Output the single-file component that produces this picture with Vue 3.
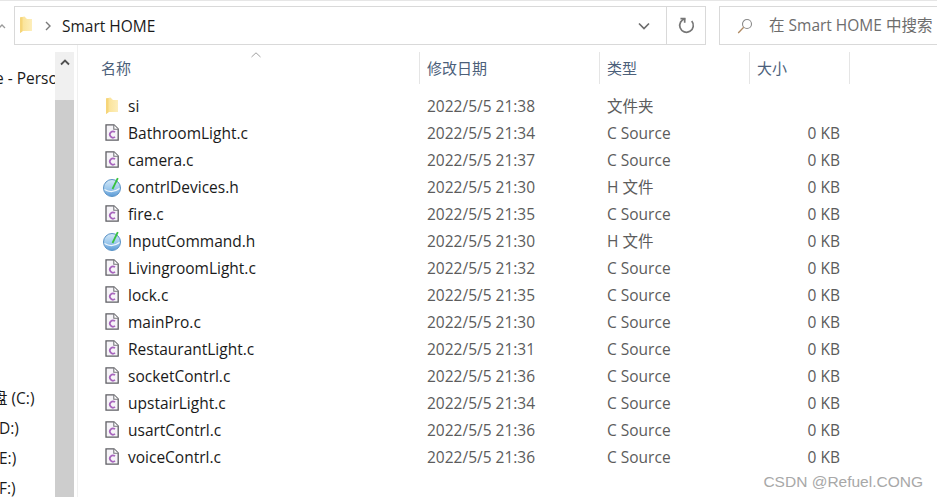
<template>
  <div class="window">
    <div class="toolbar">
      <svg class="up-arrow" width="10" height="8" viewBox="0 0 10 8"><path d="M1 6l3-3 3 3" fill="none" stroke="#9a9a9a" stroke-width="1.3" /></svg>
      <div class="address">
        <svg class="addr-folder" width="14" height="18" viewBox="0 0 14 18"><use href="#folder-shape" /></svg>
        <svg class="crumb" width="8" height="10" viewBox="0 0 8 10"><path d="M2 1l4 4-4 4" fill="none" stroke="#7a7a7a" stroke-width="1.4" /></svg>
        <span class="path">Smart HOME</span>
        <div class="addr-drop">
          <svg width="12" height="8" viewBox="0 0 12 8"><path d="M1 1.500l5 5 5-5" fill="none" stroke="#6d6d6d" stroke-width="1.7" /></svg>
        </div>
        <div class="addr-refresh">
          <svg width="17" height="17" viewBox="0 0 16 16"><path d="M4.800 2.400A6.400 6.400 0 1 0 11.200 2.400" transform="rotate(20 8 8)" fill="none" stroke="#767676" stroke-width="1.600" /><path d="M2.300 1.500h4v4" fill="none" stroke="#767676" stroke-width="1.600" /></svg>
        </div>
      </div>
      <div class="search">
        <svg class="search-icon" width="16" height="16" viewBox="0 0 16 16"><circle cx="10" cy="6" r="4.500" fill="none" stroke="#8a8a8a" stroke-width="1.100" /><path d="M6.700 9.300L1.200 15" stroke="#b08a62" stroke-width="1.300" /></svg>
        <span>在 Smart HOME 中搜索</span>
      </div>
    </div>

    <div class="body">
      <aside class="nav">
        <div class="nav-labels">
          <div class="nav-item person">e - Personal</div>
          <div class="nav-spacer"></div>
          <div class="nav-item drive c">盘 (C:)</div>
          <div class="nav-item drive">D:)</div>
          <div class="nav-item drive">E:)</div>
          <div class="nav-item drive">F:)</div>
        </div>
        <div class="scrollbar">
          <div class="scroll-btn">
            <svg width="10" height="7" viewBox="0 0 10 7"><path d="M1 5.500l4-4 4 4" fill="none" stroke="#505050" stroke-width="1.800" /></svg>
          </div>
          <div class="scroll-thumb"></div>
        </div>
      </aside>

      <main class="list">
        <div class="sort-caret">
          <svg width="10" height="6" viewBox="0 0 10 6"><path d="M.5 5L5 .8 9.500 5" fill="none" stroke="#a0a0a0" stroke-width="1" /></svg>
        </div>
        <div class="columns">
          <div class="col col-name">名称</div>
          <div class="col col-date">修改日期</div>
          <div class="col col-type">类型</div>
          <div class="col col-size">大小</div>
        </div>
        <div class="rows">
          <div v-for="file in files" :key="file.name" class="row">
            <span class="icon">
              <svg v-if="file.icon === 'folder'" width="14" height="18" viewBox="0 0 14 18"><use href="#folder-shape" /></svg>
              <svg v-else-if="file.icon === 'c'" width="14" height="17" viewBox="0 0 14 17">
                <path d="M1 .8h8L13.200 5v11.200H1z" fill="#f6f4f8" stroke="#5f5f64" stroke-width="1.300" />
                <path d="M8.800 1v4.300h4.400" fill="#fff" stroke="#77777c" stroke-width="1.100" />
                <path d="M10 8.200a3.100 3.100 0 1 0 0 4.700" fill="none" stroke="#a765bd" stroke-width="1.700" />
              </svg>
              <svg v-else width="20" height="20" viewBox="0 0 20 20">
                <defs>
                  <linearGradient id="globe-fill" x1="0" y1="0" x2="0" y2="1">
                    <stop offset="0" stop-color="#d4e8f7" />
                    <stop offset=".55" stop-color="#9cc8ec" />
                    <stop offset="1" stop-color="#5b9ad6" />
                  </linearGradient>
                </defs>
                <circle cx="10" cy="11" r="8.500" fill="url(#globe-fill)" stroke="#5b93c6" stroke-width="1" />
                <path d="M2.500 12.500q7.500 4.500 15-1" fill="none" stroke="#f2f8fd" stroke-width="1.200" />
                <path d="M10.500 12L15.800 1.200" stroke="#36c23e" stroke-width="1.800" />
              </svg>
            </span>
            <span class="cell name">{{ file.name }}</span>
            <span class="cell date">{{ file.date }}</span>
            <span class="cell type">{{ file.type }}</span>
            <span class="cell size">{{ file.size }}</span>
          </div>
        </div>
      </main>
    </div>

    <svg class="defs" width="0" height="0">
      <defs>
        <linearGradient id="folder-fill" x1="0" y1="0" x2="1" y2="0">
          <stop offset="0" stop-color="#fae08f" />
          <stop offset="1" stop-color="#fdeebb" />
        </linearGradient>
        <symbol id="folder-shape" viewBox="0 0 14 18">
          <path d="M1 1.500L5.500.5 8 3h5v12H3L1 17z" fill="url(#folder-fill)" />
          <path d="M1 1.500L3.500 1v14.500L1 17z" fill="#f6d579" />
        </symbol>
      </defs>
    </svg>

    <div class="watermark">CSDN @Refuel.CONG</div>
  </div>
</template>

<script setup>
const date = (t) => `2022/5/5 ${t}`

const cFile = (name, t) => ({ name, date: date(t), type: 'C Source', size: '0 KB', icon: 'c' })
const hFile = (name, t) => ({ name, date: date(t), type: 'H 文件', size: '0 KB', icon: 'h' })

const files = [
  { name: 'si', date: date('21:38'), type: '文件夹', size: '', icon: 'folder' },
  cFile('BathroomLight.c', '21:34'),
  cFile('camera.c', '21:37'),
  hFile('contrlDevices.h', '21:30'),
  cFile('fire.c', '21:35'),
  hFile('InputCommand.h', '21:30'),
  cFile('LivingroomLight.c', '21:32'),
  cFile('lock.c', '21:35'),
  cFile('mainPro.c', '21:30'),
  cFile('RestaurantLight.c', '21:31'),
  cFile('socketContrl.c', '21:36'),
  cFile('upstairLight.c', '21:34'),
  cFile('usartContrl.c', '21:36'),
  cFile('voiceContrl.c', '21:36')
]
</script>

<style>
html,
body {
  margin: 0;
  background: #fff;
  overflow: hidden;
}
</style>

<style scoped>
.window {
  position: relative;
  width: 937px;
  height: 497px;
  overflow: hidden;
  background: #fff;
  border-top: 1px solid #e6e6e6;
  box-sizing: border-box;
  font-family: "Open Sans", "Noto Sans CJK SC", sans-serif;
  font-size: 15.5px;
  color: #1a1a1a;
}

.defs {
  position: absolute;
}

.toolbar {
  display: flex;
  align-items: center;
  height: 39px;
  margin-top: 5px;
}

.up-arrow {
  width: 14px;
  flex: none;
  margin-left: -4px;
  margin-right: 4px;
}

.address {
  display: flex;
  align-items: center;
  width: 692px;
  height: 39px;
  box-sizing: border-box;
  border: 1px solid #d9d9d9;
  flex: none;
}

.addr-folder {
  margin-left: 4px;
  margin-top: -1px;
  flex: none;
}

.crumb {
  margin-left: 11px;
  flex: none;
}

.path {
  margin-left: 10px;
  flex: 1;
}

.addr-drop {
  width: 44px;
  display: flex;
  justify-content: center;
  align-self: stretch;
  align-items: center;
}

.addr-refresh {
  width: 38px;
  display: flex;
  justify-content: center;
  align-items: center;
  align-self: stretch;
  border-left: 1px solid #d9d9d9;
}

.search {
  display: flex;
  align-items: center;
  flex: 1;
  height: 39px;
  margin-left: 13px;
  margin-right: -10px;
  box-sizing: border-box;
  border: 1px solid #d9d9d9;
  color: #6d6d6d;
  white-space: nowrap;
}

.search-icon {
  margin-left: 17px;
  margin-right: 16px;
  flex: none;
}

.search span {
  margin-top: -2px;
}

.body {
  display: flex;
  height: 452px;
}

.nav {
  display: flex;
  width: 78px;
  flex: none;
  border-right: 1px solid #f0f0f0;
  box-sizing: border-box;
}

.nav-labels {
  width: 55px;
  overflow: hidden;
  flex: none;
  position: relative;
}

.nav-item {
  white-space: nowrap;
  height: 30px;
  line-height: 30px;
}

.person {
  margin-top: 18px;
  margin-left: -5px;
}

.nav-spacer {
  height: 290px;
}

.drive {
  margin-left: -1px;
}

.c {
  margin-left: -8px;
}

.scrollbar {
  width: 19px;
  flex: none;
  margin-top: 7px;
  background: #f0f0f0;
  display: flex;
  flex-direction: column;
}

.scroll-btn {
  height: 48px;
  display: flex;
  justify-content: center;
  padding-top: 7px;
  box-sizing: border-box;
}

.scroll-thumb {
  flex: 1;
  background: #cdcdcd;
}

.list {
  position: relative;
  flex: 1;
}

.sort-caret {
  position: absolute;
  left: 173px;
  top: 7px;
  line-height: 0;
}

.columns {
  display: flex;
  height: 32px;
  margin-top: 7px;
  color: #4c607a;
  font-size: 15px;
}

.col {
  box-sizing: border-box;
  border-right: 1px solid #e5e5e5;
  line-height: 32px;
}

.col-name {
  width: 342px;
  padding-left: 23px;
}

.col-date {
  width: 180px;
  padding-left: 7px;
}

.col-type {
  width: 150px;
  padding-left: 7px;
}

.col-size {
  width: 100px;
  padding-left: 7px;
}

.rows {
  margin-top: 8px;
}

.row {
  display: flex;
  align-items: center;
  height: 27px;
}

.icon {
  width: 50px;
  flex: none;
  display: flex;
  justify-content: center;
  align-items: center;
  padding-left: 18px;
  box-sizing: border-box;
  height: 27px;
}

.cell {
  white-space: nowrap;
}

.name {
  width: 299px;
}

.date {
  width: 180px;
  color: #5c5c5c;
}

.type {
  width: 150px;
  color: #5c5c5c;
}

.size {
  width: 83px;
  text-align: right;
  color: #5c5c5c;
}

.watermark {
  position: absolute;
  right: 14px;
  bottom: 6px;
  font-family: "Liberation Sans", sans-serif;
  font-size: 15.5px;
  color: #a8a8a8;
}
</style>
